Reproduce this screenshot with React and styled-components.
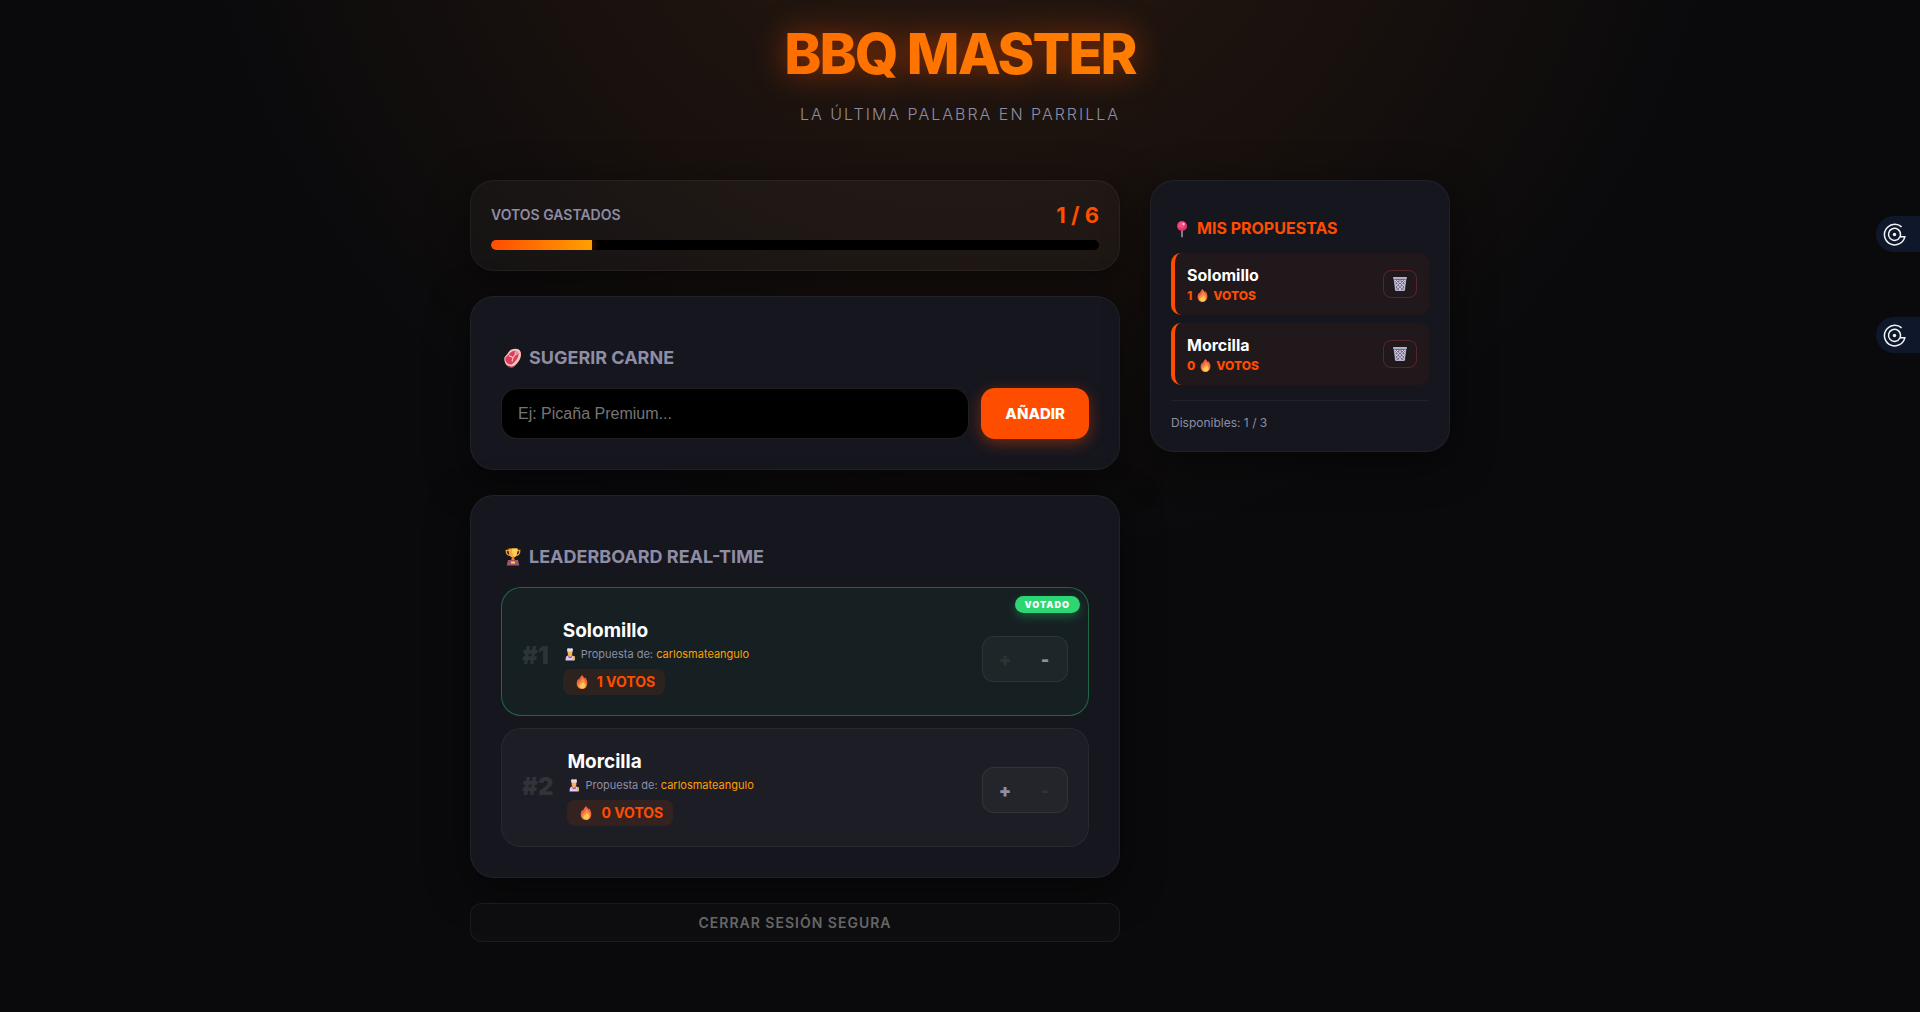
import { useState } from "react";
import styled, { createGlobalStyle } from "styled-components";

const GlobalStyle = createGlobalStyle`
  * {
    box-sizing: border-box;
  }
  body {
    margin: 0;
    min-height: 100vh;
    background-color: #0a0a0c;
    background-image: radial-gradient(circle at 50% -20%, #2b1a10 0%, transparent 50%);
    background-repeat: no-repeat;
    color: #ffffff;
    font-family: Inter, "Liberation Sans", sans-serif;
    line-height: 1.2;
  }
  button {
    font-family: inherit;
  }
`;

const Page = styled.div`
  width: 100%;
  max-width: 1020px;
  margin: 0 auto;
  padding: 0 20px 20px;
`;

const Header = styled.header`
  padding-top: 20px;
  text-align: center;
  margin-bottom: 56px;
`;

const Brand = styled.h1`
  margin: 0;
  font-size: 56px;
  font-weight: 800;
  line-height: 68px;
  letter-spacing: -2px;
  background: linear-gradient(90deg, #ff4d00, #ff9f00);
  background-clip: text;
  -webkit-background-clip: text;
  color: transparent;
  filter: drop-shadow(0 0 15px rgba(255, 77, 0, 0.5));
`;

const Tagline = styled.p`
  margin: 16px 0 0;
  font-size: 16px;
  font-weight: 300;
  line-height: 20px;
  letter-spacing: 2px;
  color: #8e8da4;
`;

const Columns = styled.div`
  display: grid;
  grid-template-columns: minmax(0, 1fr) 300px;
  align-items: start;
  gap: 30px;
  @media (max-width: 860px) {
    grid-template-columns: 1fr;
  }
`;

const Main = styled.main`
  display: flex;
  flex-direction: column;
  gap: 25px;
`;

const Card = styled.section`
  padding: ${(p) => (p.$compact ? "20px" : "30px")};
  background: ${(p) => (p.$glass ? "rgba(255, 255, 255, 0.03)" : "#16161e")};
  border: 1px solid rgba(255, 255, 255, 0.05);
  border-radius: 24px;
  box-shadow: 0 10px 40px rgba(0, 0, 0, 0.5);
`;

const BudgetRow = styled.div`
  display: flex;
  justify-content: space-between;
  align-items: center;
  margin-bottom: 10px;
`;

const BudgetLabel = styled.span`
  font-size: 14px;
  font-weight: 600;
  color: #8e8da4;
`;

const BudgetCount = styled.span`
  font-size: 22px;
  font-weight: 700;
  line-height: 29px;
  color: #ff4d00;
`;

const Track = styled.div`
  height: 10px;
  background: #000000;
  border-radius: 5px;
  overflow: hidden;
`;

const Fill = styled.div`
  height: 100%;
  background: linear-gradient(90deg, #ff4d00, #ff9f00);
  box-shadow: 0 0 10px rgba(255, 77, 0, 0.5);
`;

const Title = styled.h2`
  display: flex;
  align-items: center;
  gap: 6px;
  margin: ${(p) => (p.$small ? "18px 0 15px" : "20px 0 19px")};
  font-size: ${(p) => (p.$small ? "16px" : "18px")};
  font-weight: 700;
  line-height: ${(p) => (p.$small ? "19px" : "22px")};
  color: ${(p) => (p.$small ? "#ff4d00" : "#8e8da4")};
`;

const Form = styled.form`
  display: flex;
  gap: 12px;
`;

const Input = styled.input`
  flex: 1;
  min-width: 0;
  height: 51px;
  padding: 0 16px;
  background: #000000;
  border: 1px solid rgba(255, 255, 255, 0.12);
  border-radius: 16px;
  color: #ffffff;
  font-family: "Liberation Sans", Arial, sans-serif;
  font-size: 16px;
  outline: none;
  &::placeholder {
    color: #757575;
  }
`;

const AddButton = styled.button`
  padding: 0 24px;
  background: #ff4d00;
  border: none;
  border-radius: 14px;
  box-shadow: 0 4px 15px rgba(255, 77, 0, 0.4);
  color: #ffffff;
  font-size: 15px;
  font-weight: 800;
  cursor: pointer;
`;

const Ranking = styled.ol`
  display: flex;
  flex-direction: column;
  gap: 12px;
  margin: 0;
  padding: 0;
  list-style: none;
`;

const RankItem = styled.li`
  position: relative;
  display: flex;
  align-items: center;
  gap: 14px;
  padding: ${(p) => (p.$voted ? "30px 20px 20px" : "20px")};
  background: ${(p) => (p.$voted ? "rgba(46, 213, 115, 0.05)" : "rgba(255, 255, 255, 0.03)")};
  border: 1px solid ${(p) => (p.$voted ? "rgba(46, 213, 115, 0.4)" : "rgba(255, 255, 255, 0.05)")};
  border-radius: 20px;
`;

const Position = styled.span`
  font-size: 24px;
  font-weight: 900;
  color: rgba(255, 255, 255, 0.1);
`;

const Info = styled.div`
  flex: 1;
  display: flex;
  flex-direction: column;
  align-items: flex-start;
`;

const MeatName = styled.span`
  font-size: 19px;
  font-weight: 700;
  line-height: 26px;
`;

const Author = styled.span`
  display: flex;
  align-items: center;
  gap: 4px;
  margin: 3px 0 7px;
  font-size: 11px;
  line-height: 15px;
  color: #8e8da4;
  b {
    font-weight: 400;
    color: #ff9f00;
  }
`;

const VotePill = styled.span`
  display: flex;
  align-items: center;
  gap: 8px;
  height: 26px;
  padding: 0 10px 0 12px;
  background: rgba(255, 77, 0, 0.1);
  border-radius: 8px;
  font-size: 14px;
  font-weight: 700;
  color: #ff4d00;
`;

const VotedTag = styled.span`
  position: absolute;
  top: 8px;
  right: 8px;
  padding: 3px 10px;
  background: #2ed573;
  border-radius: 10px;
  box-shadow: 0 4px 10px rgba(46, 213, 115, 0.3);
  font-size: 9px;
  font-weight: 900;
  line-height: 11px;
  letter-spacing: 1px;
`;

const Stepper = styled.div`
  display: flex;
  gap: 4px;
  margin-top: 5px;
  padding: 4px;
  background: rgba(255, 255, 255, 0.03);
  border: 1px solid rgba(255, 255, 255, 0.07);
  border-radius: 12px;
`;

const StepButton = styled.button`
  width: 36px;
  height: 36px;
  padding: 0;
  background: none;
  border: none;
  color: #8e8da4;
  font-size: 18px;
  font-weight: 900;
  cursor: pointer;
  &:disabled {
    color: rgba(255, 255, 255, 0.08);
    cursor: default;
  }
`;

const LogoutButton = styled.button`
  height: 39px;
  background: rgba(255, 255, 255, 0.02);
  border: 1px solid rgba(255, 255, 255, 0.06);
  border-radius: 12px;
  color: #666666;
  font-size: 14px;
  font-weight: 600;
  letter-spacing: 1px;
  cursor: pointer;
`;

const Proposals = styled.ul`
  display: flex;
  flex-direction: column;
  gap: 8px;
  margin: 0;
  padding: 0;
  list-style: none;
`;

const Proposal = styled.li`
  display: flex;
  justify-content: space-between;
  align-items: center;
  padding: 12px;
  background: rgba(255, 77, 0, 0.05);
  border-left: 4px solid #ff4d00;
  border-radius: 10px;
`;

const ProposalName = styled.div`
  margin-bottom: 2px;
  font-size: 16px;
  font-weight: 700;
  line-height: 21px;
`;

const ProposalVotes = styled.div`
  display: flex;
  align-items: center;
  gap: 4px;
  font-size: 12px;
  font-weight: 800;
  line-height: 15px;
  color: #ff4d00;
`;

const DeleteButton = styled.button`
  display: flex;
  align-items: center;
  justify-content: center;
  width: 34px;
  height: 28px;
  padding: 0;
  background: none;
  border: 1px solid rgba(255, 71, 87, 0.25);
  border-radius: 8px;
  cursor: pointer;
`;

const Available = styled.p`
  margin: 15px 0 0;
  padding-top: 14px;
  border-top: 1px solid rgba(255, 255, 255, 0.05);
  font-size: 12px;
  line-height: 16px;
  color: #8e8da4;
`;

const SideTabs = styled.aside`
  position: fixed;
  top: 216px;
  right: 0;
  display: flex;
  flex-direction: column;
  gap: 65px;
`;

const SideTab = styled.button`
  display: flex;
  align-items: center;
  width: 44px;
  height: 36px;
  padding: 0 7px;
  background: #0f172a;
  border: none;
  border-radius: 18px 0 0 18px;
  cursor: pointer;
`;

const Glyph = styled.svg`
  flex: none;
  display: block;
`;

const MeatIcon = () => (
  <Glyph width="22" height="20" viewBox="-1.5 0 24 19" preserveAspectRatio="none" aria-hidden="true">
    <path d="M3 8C6 6 7 3 10 2c4-1.600 9-1.300 10 2 1 4-1 8-4 11-2 2-4 4.500-7 4-3-.5-6-3-6.500-6C2 11 2 9 3 8Z" fill="#8e3553" />
    <path d="M3 8C6 6 7 2.500 10 1.500c4-1.500 9-1 10 2.500 1 4-1 7.500-4 10.500-2 2-4 3.500-7 3-3-.5-6-2-6.500-5C2 10.500 2 9 3 8Z" fill="#f8c3b8" />
    <path d="M4 8.500C7 7 8 4 11 3c3-1 6-.6 6.500 2 .5 3-1.500 6-4 8-2 2-4 3.300-6 2.500C5 15 3.300 13 3.200 11c0-1 .1-2 .8-2.500Z" fill="#dc3c62" />
    <path d="M7 7.500c2 .2 3.500.8 4.500 2L15 5M11.500 9.500 10.500 13" stroke="#f8c3b8" strokeWidth="1.200" fill="none" />
    <circle cx="15" cy="4.800" r="1.700" fill="#f8d5cc" />
    <circle cx="15" cy="4.800" r=".7" fill="#b8405c" />
  </Glyph>
);

const TrophyIcon = () => (
  <Glyph width="22" height="20" viewBox="-1 0 22 20" aria-hidden="true">
    <path d="M7 3.500H4.200c0 3.500 1.600 4.800 4 5M15 3.500h2.800c0 3.500-1.600 4.800-4 5" stroke="#f09a35" strokeWidth="1.300" fill="none" />
    <path d="M6.500 1.500h9c0 5-.8 8.500-4.500 9.500-3.700-1-4.500-4.500-4.500-9.500Z" fill="#f7a83c" />
    <path d="M10 1.500h5.500c0 4-.7 7-2.500 8.500-2-.5-3-4-3-8.500Z" fill="#ffd257" />
    <path d="M10 10.500h2l1 3H9Z" fill="#e8813a" />
    <path d="M6 13h10l1.300 5.500H4.700Z" fill="#9d5968" />
    <rect x="9" y="14.500" width="4" height="2" rx=".5" fill="#ffd257" />
  </Glyph>
);

const PinIcon = () => (
  <Glyph width="20" height="18" viewBox="0 0 20 18" aria-hidden="true">
    <rect x="10" y="8" width="2" height="9.500" rx="1" fill="#7d7b8c" />
    <circle cx="11" cy="6" r="5" fill="#e8326e" />
    <circle cx="10.500" cy="5" r="3.300" fill="#f54c83" />
    <circle cx="12.500" cy="4" r="1.200" fill="#ffc1d5" />
  </Glyph>
);

const FlameIcon = ({ size = 13 }) => (
  <Glyph width={size} height={size} viewBox="0 0 12 14" aria-hidden="true">
    <path d="M6 0c1 1.500 2 2 2.500 3.300L9.300 2.500C10.800 4.500 11.500 6.500 11.300 8.700 11 12 9 14 6 14S.8 12 .7 8.800C.6 6.500 1.500 5 2.500 3.800l.5 1C3.700 3 4.500 1.500 6 0Z" fill="#ee6240" />
    <path d="M6 3c2.500 2.200 4.200 3.800 4.200 6.500 0 2.500-1.700 4.200-4.200 4.200s-4-1.500-4-3.800C2 8.500 3 7.500 4 6.800 5 6 5.800 5 6 3Z" fill="#f79245" />
    <path d="M7 7c1.700 1.300 2.300 2.300 2.300 3.700 0 1.800-1.200 2.800-2.900 2.800s-2.900-1-2.900-2.500C3.500 9 6.500 9 7 7Z" fill="#ffc850" />
  </Glyph>
);

const CookIcon = () => (
  <Glyph width="14" height="13" viewBox="0 0 14 13" aria-hidden="true">
    <path d="M4 1.500C4 .2 6 0 7 .7c1-.7 3-.5 3 .8L9.500 4h-5Z" fill="#e6ddf2" />
    <path d="M4.700 3.500h4.600v2c0 1.500-1 2.300-2.300 2.300S4.700 7 4.700 5.500Z" fill="#f5b840" />
    <path d="M2.500 12.500c0-3.500 1-5 3-5.200h3.200c2 .2 3 1.700 3 5.200Z" fill="#d8cbed" />
    <path d="m5 7 2 2 2.200-2-.7 3H5.800Z" fill="#dc3c5c" />
    <rect x="10" y="8" width="2" height="4" rx="1" fill="#f5b840" />
  </Glyph>
);

const TrashIcon = () => (
  <Glyph width="16" height="16" viewBox="0 0 16 16" aria-hidden="true">
    <path d="M1.500 2.500h13L13 15H3Z" fill="#6f6a84" />
    <path
      d="m3 4 9.500 10M6.500 4l6.500 7M10 4l3.500 3.500M3.500 8l6 6.500M13 4 3.500 14M9.500 4 3 11M6 4 2.800 7.500M12.500 8l-6 6.500"
      stroke="#d6d1e4"
      strokeWidth="1"
    />
    <path d="M2.500 3.500 4 14.300h8l1.500-10.800" stroke="#c3bdd6" strokeWidth="1" fill="none" />
    <rect x="1" y="1" width="14" height="2" rx=".7" fill="#b5aec8" />
  </Glyph>
);

const SpiralIcon = () => (
  <Glyph width="23" height="23" viewBox="0 0 23 23" fill="none" stroke="#f1f5f9" strokeWidth="1.500" aria-hidden="true">
    <path d="M18.600 3.900A10.300 10.300 0 1 0 21.800 13.800h-4.800" />
    <path d="M17 13.800a6 6 0 1 1 .5-2.300c0 .9-.2 1.600-.5 2.300Z" />
    <circle cx="11.500" cy="11.500" r="1.700" fill="#f1f5f9" stroke="none" />
  </Glyph>
);

const USER = "carlosmateangulo";
const MAX_VOTES = 6;
const MAX_PROPOSALS = 3;

const initialMeats = [
  { id: 1, name: "Solomillo", author: USER, votes: 1, mine: 1 },
  { id: 2, name: "Morcilla", author: USER, votes: 0, mine: 0 },
];

const App = () => {
  const [meats, setMeats] = useState(initialMeats);
  const [draft, setDraft] = useState("");

  const spent = meats.reduce((sum, m) => sum + m.mine, 0);
  const proposals = meats.filter((m) => m.author === USER);

  const vote = (id, delta) =>
    setMeats(meats.map((m) => (m.id === id ? { ...m, votes: m.votes + delta, mine: m.mine + delta } : m)));

  const remove = (id) => setMeats(meats.filter((m) => m.id !== id));

  const add = (e) => {
    e.preventDefault();
    if (!draft.trim() || proposals.length >= MAX_PROPOSALS) return;
    setMeats([...meats, { id: Date.now(), name: draft.trim(), author: USER, votes: 0, mine: 0 }]);
    setDraft("");
  };

  return (
    <>
      <GlobalStyle />
      <Header>
        <Brand>BBQ MASTER</Brand>
        <Tagline>LA ÚLTIMA PALABRA EN PARRILLA</Tagline>
      </Header>

      <Page>
        <Columns>
          <Main>
            <Card $compact $glass>
              <BudgetRow>
                <BudgetLabel>VOTOS GASTADOS</BudgetLabel>
                <BudgetCount>
                  {spent} / {MAX_VOTES}
                </BudgetCount>
              </BudgetRow>
              <Track>
                <Fill style={{ width: `${(spent / MAX_VOTES) * 100}%` }} />
              </Track>
            </Card>

            <Card>
              <Title>
                <MeatIcon />
                SUGERIR CARNE
              </Title>
              <Form onSubmit={add}>
                <Input
                  aria-label="Sugerir carne"
                  placeholder="Ej: Picaña Premium..."
                  value={draft}
                  onChange={(e) => setDraft(e.target.value)}
                />
                <AddButton type="submit">AÑADIR</AddButton>
              </Form>
            </Card>

            <Card>
              <Title>
                <TrophyIcon />
                LEADERBOARD REAL-TIME
              </Title>
              <Ranking>
                {meats.map((m, i) => (
                  <RankItem key={m.id} $voted={m.mine > 0}>
                    {m.mine > 0 && <VotedTag>VOTADO</VotedTag>}
                    <Position>#{i + 1}</Position>
                    <Info>
                      <MeatName>{m.name}</MeatName>
                      <Author>
                        <CookIcon />
                        <span>
                          Propuesta de: <b>{m.author}</b>
                        </span>
                      </Author>
                      <VotePill>
                        <FlameIcon size={14} />
                        {m.votes} VOTOS
                      </VotePill>
                    </Info>
                    <Stepper>
                      <StepButton
                        aria-label={`Votar ${m.name}`}
                        disabled={m.mine > 0 || spent >= MAX_VOTES}
                        onClick={() => vote(m.id, 1)}
                      >
                        +
                      </StepButton>
                      <StepButton
                        aria-label={`Quitar voto a ${m.name}`}
                        disabled={m.mine === 0}
                        onClick={() => vote(m.id, -1)}
                      >
                        -
                      </StepButton>
                    </Stepper>
                  </RankItem>
                ))}
              </Ranking>
            </Card>

            <LogoutButton>CERRAR SESIÓN SEGURA</LogoutButton>
          </Main>

          <Card as="aside" $compact>
            <Title $small>
              <PinIcon />
              MIS PROPUESTAS
            </Title>
            <Proposals>
              {proposals.map((m) => (
                <Proposal key={m.id}>
                  <div>
                    <ProposalName>{m.name}</ProposalName>
                    <ProposalVotes>
                      {m.votes}
                      <FlameIcon />
                      VOTOS
                    </ProposalVotes>
                  </div>
                  <DeleteButton aria-label={`Eliminar ${m.name}`} onClick={() => remove(m.id)}>
                    <TrashIcon />
                  </DeleteButton>
                </Proposal>
              ))}
            </Proposals>
            <Available>
              Disponibles: {MAX_PROPOSALS - proposals.length} / {MAX_PROPOSALS}
            </Available>
          </Card>
        </Columns>
      </Page>

      <SideTabs>
        <SideTab aria-label="Abrir panel">
          <SpiralIcon />
        </SideTab>
        <SideTab aria-label="Abrir ajustes">
          <SpiralIcon />
        </SideTab>
      </SideTabs>
    </>
  );
};

export default App;
